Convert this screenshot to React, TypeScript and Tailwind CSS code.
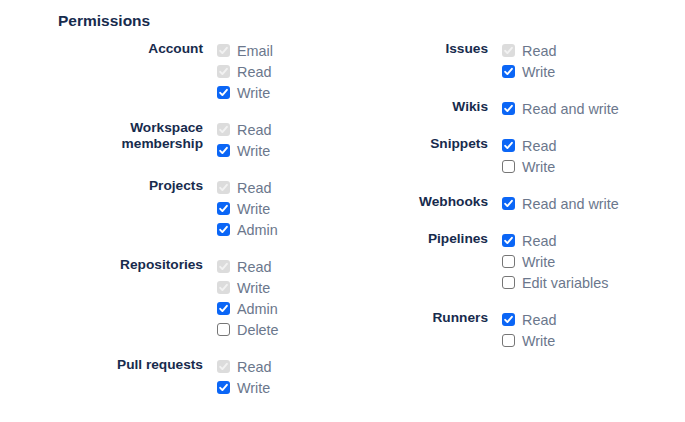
type State = 'on' | 'off' | 'locked'

type Option = { label: string; state: State }
type Group = { name: string[]; options: Option[] }

const left: Group[] = [
  {
    name: ['Account'],
    options: [
      { label: 'Email', state: 'locked' },
      { label: 'Read', state: 'locked' },
      { label: 'Write', state: 'on' },
    ],
  },
  {
    name: ['Workspace', 'membership'],
    options: [
      { label: 'Read', state: 'locked' },
      { label: 'Write', state: 'on' },
    ],
  },
  {
    name: ['Projects'],
    options: [
      { label: 'Read', state: 'locked' },
      { label: 'Write', state: 'on' },
      { label: 'Admin', state: 'on' },
    ],
  },
  {
    name: ['Repositories'],
    options: [
      { label: 'Read', state: 'locked' },
      { label: 'Write', state: 'locked' },
      { label: 'Admin', state: 'on' },
      { label: 'Delete', state: 'off' },
    ],
  },
  {
    name: ['Pull requests'],
    options: [
      { label: 'Read', state: 'locked' },
      { label: 'Write', state: 'on' },
    ],
  },
]

const right: Group[] = [
  {
    name: ['Issues'],
    options: [
      { label: 'Read', state: 'locked' },
      { label: 'Write', state: 'on' },
    ],
  },
  { name: ['Wikis'], options: [{ label: 'Read and write', state: 'on' }] },
  {
    name: ['Snippets'],
    options: [
      { label: 'Read', state: 'on' },
      { label: 'Write', state: 'off' },
    ],
  },
  { name: ['Webhooks'], options: [{ label: 'Read and write', state: 'on' }] },
  {
    name: ['Pipelines'],
    options: [
      { label: 'Read', state: 'on' },
      { label: 'Write', state: 'off' },
      { label: 'Edit variables', state: 'off' },
    ],
  },
  {
    name: ['Runners'],
    options: [
      { label: 'Read', state: 'on' },
      { label: 'Write', state: 'off' },
    ],
  },
]

function Box({ state }: { state: State }) {
  if (state === 'off') {
    return <span className="block h-[13px] w-[13px] shrink-0 rounded-[3px] border border-[#767676] bg-white" />
  }
  const locked = state === 'locked'
  return (
    <span
      className={
        locked
          ? 'flex h-[13px] w-[13px] shrink-0 items-center justify-center rounded-[3px] bg-[#dcdcdc]'
          : 'flex h-[13px] w-[13px] shrink-0 items-center justify-center rounded-[3px] bg-[#0b66f6]'
      }
    >
      <svg viewBox="0 0 13 13" className="h-[13px] w-[13px]">
        <path
          d="M3.2 6.8 L5.4 9.1 L9.9 3.8"
          fill="none"
          stroke={locked ? '#f2f2f2' : '#ffffff'}
          strokeWidth="1.9"
          strokeLinecap="round"
          strokeLinejoin="round"
        />
      </svg>
    </span>
  )
}

function Column({ groups }: { groups: Group[] }) {
  return (
    <div className="flex w-[285px] flex-col gap-4">
      {groups.map((g) => (
        <div key={g.name.join(' ')} className="flex">
          <div className="w-[145px] pt-px text-right text-[13.7px] font-bold leading-4 text-[#172b4d]">
            {g.name.map((line) => (
              <div key={line}>{line}</div>
            ))}
          </div>
          <div className="ml-[14px] flex flex-col">
            {g.options.map((o) => (
              <label key={o.label} className="flex h-[21px] items-center gap-[7px] text-[14.4px] text-[#6b778c]">
                <Box state={o.state} />
                <span className="pt-[3px]">{o.label}</span>
              </label>
            ))}
          </div>
        </div>
      ))}
    </div>
  )
}

export default function App() {
  return (
    <div className="h-[422px] w-[685px] bg-white pl-[58px] pt-[11px] font-['Liberation_Sans',Arial,sans-serif]">
      <h2 className="text-[15.5px] font-bold leading-5 text-[#172b4d]">Permissions</h2>
      <div className="mt-[9px] flex">
        <Column groups={left} />
        <Column groups={right} />
      </div>
    </div>
  )
}
